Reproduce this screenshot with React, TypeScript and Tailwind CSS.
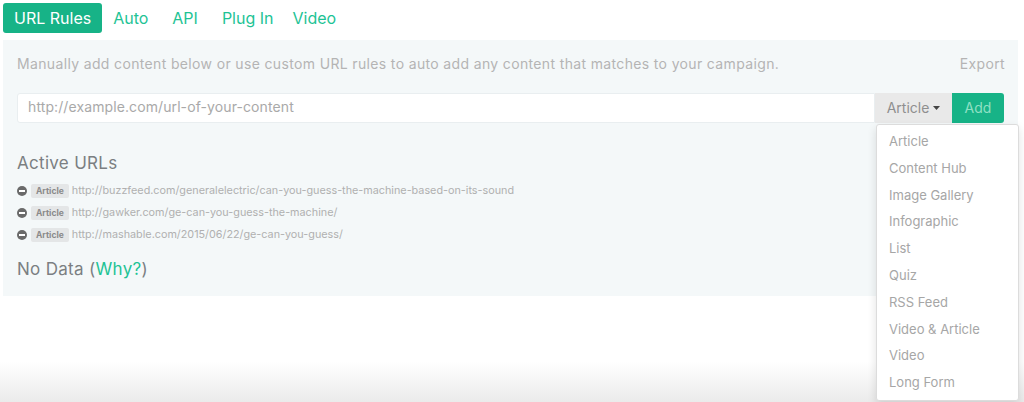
import React from "react";

const urls = [
  "http://buzzfeed.com/generalelectric/can-you-guess-the-machine-based-on-its-sound",
  "http://gawker.com/ge-can-you-guess-the-machine/",
  "http://mashable.com/2015/06/22/ge-can-you-guess/",
];

const items = [
  "Article",
  "Content Hub",
  "Image Gallery",
  "Infographic",
  "List",
  "Quiz",
  "RSS Feed",
  "Video & Article",
  "Video",
  "Long Form",
];

function MinusCircle() {
  return (
    <svg width="10" height="10" viewBox="0 0 10 10" className="shrink-0">
      <circle cx="5" cy="5" r="5" fill="#6a6a6a" />
      <rect x="2" y="4" width="6" height="2" fill="#fff" />
    </svg>
  );
}

export default function App() {
  return (
    <div
      className="relative w-[1024px] h-[402px] overflow-hidden bg-white"
      style={{ fontFamily: "Inter, 'Noto Sans', sans-serif" }}
    >
      <div className="flex items-start h-[40px] pt-[3px] pl-[3px]">
        <div className="h-[30px] px-[11px] rounded-[3px] bg-[#17b387] text-white text-[16px] flex items-center">
          URL Rules
        </div>
        <div className="h-[30px] flex items-center text-[#1ec395] text-[16px] ml-[11px]">Auto</div>
        <div className="h-[30px] flex items-center text-[#1ec395] text-[16px] ml-[24px]">API</div>
        <div className="h-[30px] flex items-center text-[#1ec395] text-[16px] ml-[24px]">Plug In</div>
        <div className="h-[30px] flex items-center text-[#1ec395] text-[16px] ml-[19px]">Video</div>
      </div>

      <div className="mx-[3px] w-[1015px] h-[256px] bg-[#f4f8f9] px-[14px] pt-[14px]">
        <div className="flex justify-between text-[14px] text-[#b4b4b4] tracking-[0.35px] h-[20px] leading-[20px]">
          <span>Manually add content below or use custom URL rules to auto add any content that matches to your campaign.</span>
          <span className="mr-[-1px]">Export</span>
        </div>
        <div className="flex mt-[19px] h-[30px]">
          <div className="flex-1 bg-white border border-[#e9eef0] rounded-l-[3px] flex items-center pl-[10px] pb-[3px] text-[14px] text-[#a9a9a9] tracking-[0.1px]">
            http://example.com/url-of-your-content
          </div>
          <div className="w-[77px] bg-[#e9e9e9] flex items-center justify-center text-[14px] text-[#8f8f8f] gap-[4px] pb-[1px]">
            Article
            <svg width="7" height="4" viewBox="0 0 7 4"><path d="M0 0h7L3.5 4z" fill="#444" /></svg>
          </div>
          <div className="w-[52px] bg-[#17b387] rounded-r-[3px] flex items-center justify-center text-[14px] text-[#8fe0c4] pb-[1px]">
            Add
          </div>
        </div>

        <div className="mt-[28px] text-[17px] text-[#7b7f82] tracking-[0.3px] leading-[24px]">Active URLs</div>
        <div className="mt-[7px] flex flex-col gap-[4px]">
          {urls.map((u) => (
            <div key={u} className="flex items-center h-[18px] gap-[3px]">
              <MinusCircle />
              <span className="ml-[1px] bg-[#e4e6e7] text-[#8a8a8a] text-[8.5px] font-bold px-[5px] h-[14px] leading-[14px] rounded-[2px]">
                Article
              </span>
              <span className="text-[10.8px] text-[#b0b0b0]">{u}</span>
            </div>
          ))}
        </div>
        <div className="mt-[13px] text-[17px] text-[#7b7f82] tracking-[0.3px] leading-[24px]">
          No Data (<span className="text-[#1ec395]">Why?</span>)
        </div>
      </div>

      <div className="absolute left-0 right-0 bottom-0 h-[40px] bg-gradient-to-b from-white/0 to-[#ebebeb] pointer-events-none" />

      <div className="absolute left-[876px] top-[124px] w-[143px] h-[277px] bg-white border border-[#dcdcdc] rounded-[3px] shadow-[0_4px_10px_rgba(0,0,0,0.12)] pt-[6px]">
        {items.map((it) => (
          <div key={it} className="h-[26.8px] leading-[20px] px-[12px] text-[13px] text-[#a6a6a6]">
            {it}
          </div>
        ))}
      </div>
    </div>
  );
}
